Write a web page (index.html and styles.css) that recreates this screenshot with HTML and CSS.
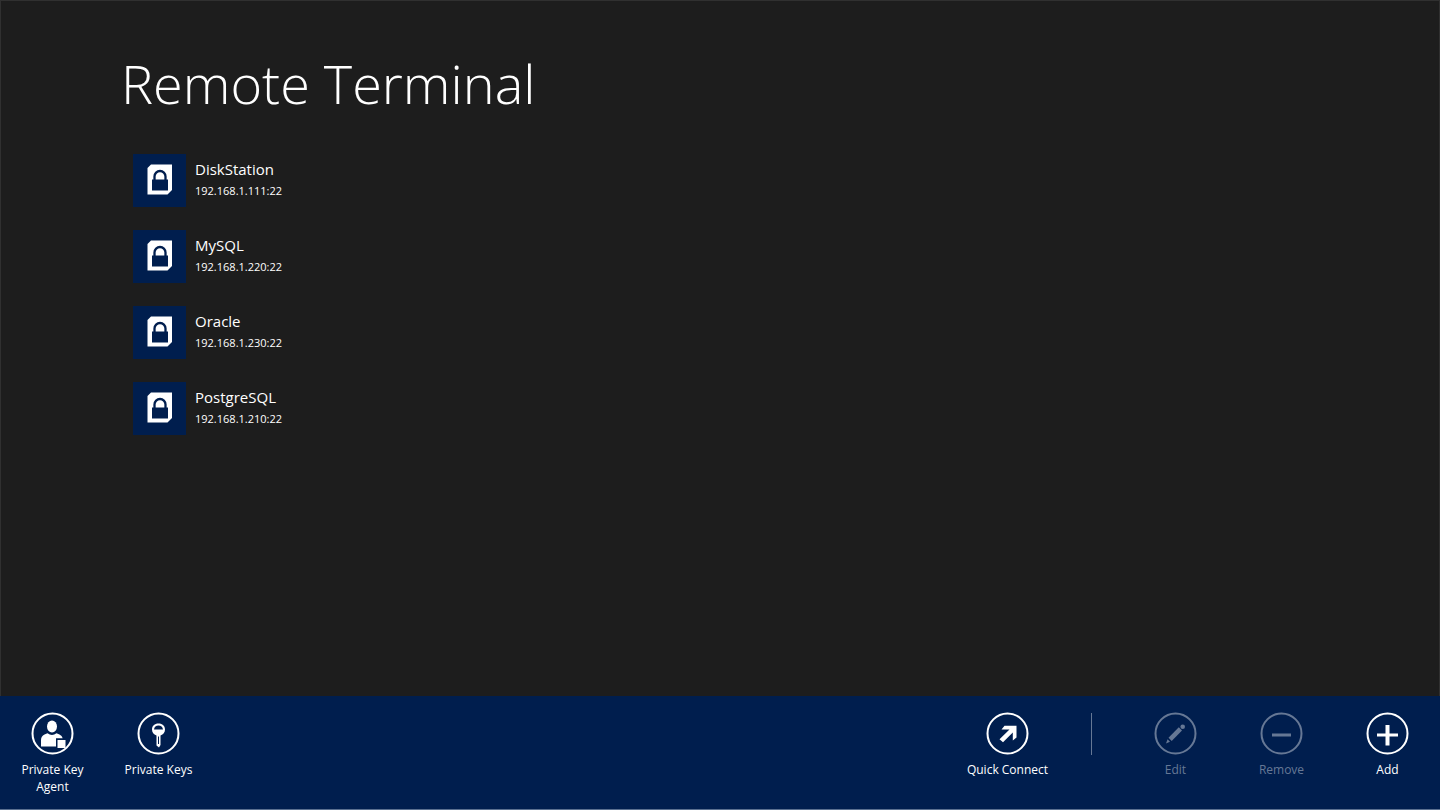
FILE: index.html
```html
<!DOCTYPE html>
<html lang="en">
<head>
    <meta charset="UTF-8">
    <meta name="viewport" content="width=device-width, initial-scale=1.0">
    <title>Remote Terminal</title>
    <link rel="stylesheet" href="styles.css">
</head>
<body>
    <!-- shared favorite icon -->
    <svg class="defs" aria-hidden="true">
        <symbol id="lock-card" viewBox="0 0 53 53">
            <path fill="#fff" d="M18 10.500H39V36L34.500 40.500H14.500V14Z"/>
            <path fill="none" stroke="#001e4e" stroke-width="2.300" d="M21.500 26V22.500a5.500 5.500 0 0 1 11 0V26"/>
            <path fill="#001e4e" d="M19 25.500H35V36.500H19Z"/>
        </symbol>
    </svg>

    <main class="content">
        <h1>Remote Terminal</h1>
        <ul class="favorites">
            <li>
                <a class="favorite" href="#">
                    <svg class="tile"><use href="#lock-card"/></svg>
                    <span class="info">
                        <span class="name">DiskStation</span>
                        <span class="host">192.168.1.111:22</span>
                    </span>
                </a>
            </li>
            <li>
                <a class="favorite" href="#">
                    <svg class="tile"><use href="#lock-card"/></svg>
                    <span class="info">
                        <span class="name">MySQL</span>
                        <span class="host">192.168.1.220:22</span>
                    </span>
                </a>
            </li>
            <li>
                <a class="favorite" href="#">
                    <svg class="tile"><use href="#lock-card"/></svg>
                    <span class="info">
                        <span class="name">Oracle</span>
                        <span class="host">192.168.1.230:22</span>
                    </span>
                </a>
            </li>
            <li>
                <a class="favorite" href="#">
                    <svg class="tile"><use href="#lock-card"/></svg>
                    <span class="info">
                        <span class="name">PostgreSQL</span>
                        <span class="host">192.168.1.210:22</span>
                    </span>
                </a>
            </li>
        </ul>
    </main>

    <footer class="appbar">
        <div class="group">
            <button class="command" type="button">
                <svg viewBox="0 0 43 43">
                    <circle class="ring" cx="21.500" cy="21.500" r="20"/>
                    <ellipse cx="21" cy="14.500" rx="5" ry="6"/>
                    <path d="M10 34.500V28q0-4 3.500-5.500l3-1.200q4.500 3.200 9 0l3 1.200q2.500 1 3.200 3.700H25V34.500Z"/>
                    <path d="M26.500 28H34.500V36H26.500Z"/>
                </svg>
                <span>Private Key Agent</span>
            </button>
            <button class="command" type="button">
                <svg viewBox="0 0 43 43">
                    <circle class="ring" cx="21.500" cy="21.500" r="20"/>
                    <path fill-rule="evenodd" d="M21.500 11.500c4 0 6.500 2.500 6.500 6 0 3.200-1.700 4.800-4.500 6V33L22 35.500 19.500 33.500V23.500C16.700 22.300 15 20.700 15 17.500c0-3.500 2.500-6 6.500-6ZM17 17.500h9c-.3-2.500-2-3.900-4.500-3.900s-4.200 1.400-4.500 3.900Z"/>
                    <path class="cut" d="M21.500 24.500V32"/>
                </svg>
                <span>Private Keys</span>
            </button>
        </div>
        <div class="group">
            <button class="command" type="button">
                <svg viewBox="0 0 43 43">
                    <circle class="ring" cx="21.500" cy="21.500" r="20"/>
                    <path d="M18.500 13.700H30.500V25.500L26.800 28.500V20.500L17 30.300 13.500 27.200 23.500 17.500H15.500Z"/>
                </svg>
                <span>Quick Connect</span>
            </button>
            <div class="separator"></div>
            <button class="command" type="button" disabled>
                <svg viewBox="0 0 43 43">
                    <circle class="ring" cx="21.500" cy="21.500" r="20"/>
                    <path d="M24.800 15.200l3.200 3.200L17.700 28.900l-3.200-3.200Z"/>
                    <circle cx="28.700" cy="14.700" r="2.300"/>
                    <path d="M13.600 27.300l2.400 2.400-4 1.700Z"/>
                </svg>
                <span>Edit</span>
            </button>
            <button class="command" type="button" disabled>
                <svg viewBox="0 0 43 43">
                    <circle class="ring" cx="21.500" cy="21.500" r="20"/>
                    <path d="M12 21.500H31V24.500H12Z"/>
                </svg>
                <span>Remove</span>
            </button>
            <button class="command" type="button">
                <svg viewBox="0 0 43 43">
                    <circle class="ring" cx="21.500" cy="21.500" r="20"/>
                    <path d="M11 21.500H19.500V13H23.500V21.500H32V24.500H23.500V33.500H19.500V24.500H11Z"/>
                </svg>
                <span>Add</span>
            </button>
        </div>
    </footer>
</body>
</html>
```
FILE: styles.css
```css
* {
    box-sizing: border-box;
}
body {
    margin: 0;
    min-height: 100vh;
    display: flex;
    flex-direction: column;
    background-color: #1d1d1d;
    color: #fff;
    font-family: 'Segoe UI', 'Open Sans', sans-serif;
}
.defs {
    display: none;
}
.content {
    flex: 1;
    padding: 42px 120px 40px;
    border: 1px solid #303030;
    border-bottom: none;
}
h1 {
    margin: 0;
    font-size: 54px;
    font-weight: 300;
    line-height: 80px;
}
.favorites {
    list-style: none;
    margin: 31px 0 0;
    padding: 0 12px;
    display: flex;
    flex-direction: column;
    align-items: flex-start;
    gap: 23px;
}
.favorite {
    display: flex;
    gap: 9px;
    color: #fff;
    text-decoration: none;
}
.tile {
    width: 53px;
    height: 53px;
    background-color: #001e4e;
}
.info {
    padding-top: 4px;
    display: flex;
    flex-direction: column;
}
.name {
    font-size: 15px;
    line-height: 22px;
}
.host {
    font-size: 11px;
    line-height: 22px;
}
.appbar {
    display: flex;
    justify-content: space-between;
    min-height: 114px;
    background-color: #001e4e;
    border-bottom: 1px solid #5a7090;
}
.group {
    display: flex;
    align-items: flex-start;
    gap: 1px;
}
.command {
    width: 105px;
    padding: 16px 8px 0;
    display: flex;
    flex-direction: column;
    align-items: center;
    gap: 6px;
    border: none;
    background: none;
    color: #fff;
    font-family: inherit;
    font-size: 12px;
    line-height: 17px;
    cursor: pointer;
}
.command svg {
    width: 43px;
    height: 43px;
    fill: currentColor;
}
.command:disabled {
    color: #667895;
    cursor: default;
}
.ring {
    fill: none;
    stroke: currentColor;
    stroke-width: 2;
}
.cut {
    stroke: #001e4e;
    stroke-width: 1;
}
.separator {
    width: 1px;
    height: 42px;
    margin: 17px 30px 0;
    background-color: #667895;
}
```
